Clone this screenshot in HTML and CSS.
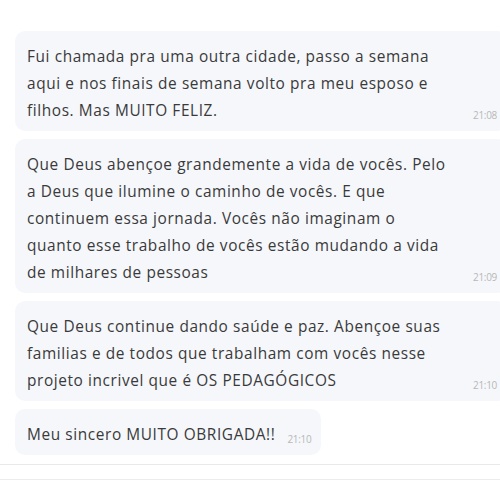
FILE: index.html
```html
<!DOCTYPE html>
<html lang="pt-BR">
<head>
<meta charset="utf-8">
<title>Mensagens</title>
<link rel="stylesheet" href="styles.css">
</head>
<body>
  <main class="chat">
    <div class="messages">
      <div class="bubble">
        <p class="text text-block">Fui chamada pra uma outra cidade, passo a semana<br>aqui e nos finais de semana volto pra meu esposo e<br>filhos. Mas MUITO FELIZ.</p>
        <span class="time">21:08</span>
      </div>
      <div class="bubble">
        <p class="text text-block">Que Deus abençoe grandemente a vida de vocês. Pelo<br>a Deus que ilumine o caminho de vocês. E que<br>continuem essa jornada. Vocês não imaginam o<br>quanto esse trabalho de vocês estão mudando a vida<br>de milhares de pessoas</p>
        <span class="time">21:09</span>
      </div>
      <div class="bubble">
        <p class="text text-block">Que Deus continue dando saúde e paz. Abençoe suas<br>familias e de todos que trabalham com vocês nesse<br>projeto incrivel que é OS PEDAGÓGICOS</p>
        <span class="time">21:10</span>
      </div>
      <div class="bubble">
        <p class="text">Meu sincero MUITO OBRIGADA!!</p>
        <span class="time">21:10</span>
      </div>
    </div>
    <footer class="composer">
      <div class="composer-bar"></div>
    </footer>
  </main>
</body>
</html>
```

FILE: styles.css
```css
html, body {
  margin: 0;
  padding: 0;
  background: #ffffff;
  overflow: hidden;
  width: 500px;
  height: 500px;
}

.chat {
  font-family: "Open Sans", "Liberation Sans", sans-serif;
  color: #3a3a3a;
}

.messages {
  display: flex;
  flex-direction: column;
  align-items: flex-start;
  gap: 8px;
  padding: 31px 0 0 15px;
  width: 700px;
}

.bubble {
  display: flex;
  align-items: flex-end;
  background: #f5f7fb;
  border-radius: 10px;
  padding: 12px 10px 7px 12px;
}

.text {
  margin: 0;
  max-width: 470px;
  font-size: 15.4px;
  line-height: 27px;
  letter-spacing: 0.6px;
}

/* multi-line messages share one column width */
.text-block {
  width: 434px;
}

.time {
  flex: none;
  margin: 0 0 2px 12px;
  font-size: 10px;
  line-height: 14px;
  color: #b8b8b8;
  letter-spacing: -0.3px;
}

.composer {
  margin-top: 9px;
  border-top: 1px solid #e9e9e9;
}

.composer-bar {
  height: 14px;
  border-bottom: 1px solid #ececec;
}
```
